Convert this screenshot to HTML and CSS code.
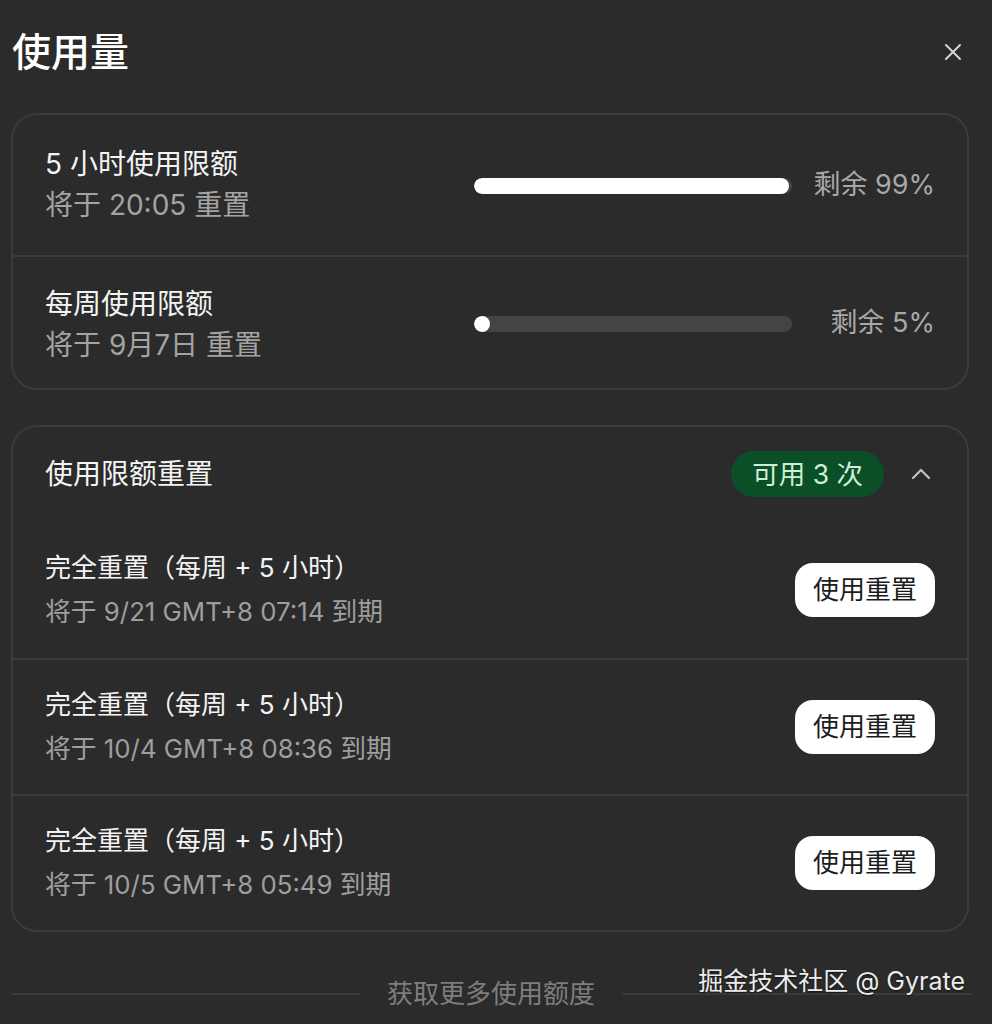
FILE: index.html
```html
<!DOCTYPE html>
<html lang="zh-CN">
<head>
<meta charset="utf-8">
<title>使用量</title>
<link rel="stylesheet" href="styles.css">
</head>
<body>
<div class="page">
  <header class="top">
    <h1 class="title">使用量</h1>
    <button class="close" aria-label="关闭">
      <svg width="18" height="18" viewBox="0 0 18 18"><path d="M2 2 L16 16 M16 2 L2 16" stroke="#d4d4d4" stroke-width="2" stroke-linecap="round" fill="none"/></svg>
    </button>
  </header>

  <section class="card">
    <div class="limit-row first">
      <div class="texts">
        <div class="t1">5 小时使用限额</div>
        <div class="t2">将于 20:05 重置</div>
      </div>
      <div class="bar"><div class="fill" style="width: 99%"></div></div>
      <div class="pct">剩余 99%</div>
    </div>
    <div class="limit-row second">
      <div class="texts">
        <div class="t1">每周使用限额</div>
        <div class="t2">将于 9月7日 重置</div>
      </div>
      <div class="bar"><div class="fill" style="width: 5%"></div></div>
      <div class="pct">剩余 5%</div>
    </div>
  </section>

  <section class="card resets">
    <div class="reset-head">
      <div class="rh-title">使用限额重置</div>
      <div class="pill">可用 3 次</div>
      <svg class="chev" width="20" height="14" viewBox="0 0 20 14"><path d="M2 11 L10 3 L18 11" stroke="#c4c4c4" stroke-width="2.2" fill="none" stroke-linecap="round" stroke-linejoin="round"/></svg>
    </div>
    <div class="item">
      <div class="texts">
        <div class="i1">完全重置（每周 + 5 小时）</div>
        <div class="i2">将于 9/21 GMT+8 07:14 到期</div>
      </div>
      <button class="btn">使用重置</button>
    </div>
    <div class="item">
      <div class="texts">
        <div class="i1">完全重置（每周 + 5 小时）</div>
        <div class="i2">将于 10/4 GMT+8 08:36 到期</div>
      </div>
      <button class="btn">使用重置</button>
    </div>
    <div class="item">
      <div class="texts">
        <div class="i1">完全重置（每周 + 5 小时）</div>
        <div class="i2">将于 10/5 GMT+8 05:49 到期</div>
      </div>
      <button class="btn">使用重置</button>
    </div>
  </section>

  <footer class="more">
    <span class="line"></span>
    <span class="more-text">获取更多使用额度</span>
    <span class="line"></span>
  </footer>

  <div class="watermark">掘金技术社区 @ Gyrate</div>
</div>
</body>
</html>
```

FILE: styles.css
```css
html, body {
  margin: 0;
  padding: 0;
  background: #2b2b2b;
}
body {
  font-family: "Inter", "Noto Sans CJK SC", sans-serif;
  color: #f2f2f2;
}
.page {
  position: relative;
  width: 992px;
  height: 1024px;
  box-sizing: border-box;
  padding: 0 23px 0 11px;
  overflow: hidden;
}
.top {
  display: flex;
  align-items: center;
  justify-content: space-between;
  padding-top: 28px;
  height: 48px;
}
.title {
  margin: 0 0 0 1px;
  font-size: 39px;
  line-height: 48px;
  font-weight: 500;
  color: #ffffff;
}
.close {
  background: none;
  border: 0;
  padding: 0;
  margin-right: 7px;
  width: 18px;
  height: 18px;
  display: flex;
}
.card {
  margin-top: 37px;
  border: 2px solid #3b3b3b;
  border-radius: 26px;
}
.limit-row {
  display: grid;
  grid-template-columns: 1fr 318px 143px;
  align-items: center;
  padding: 0 32px;
}
.limit-row.first {
  height: 140px;
  border-bottom: 2px solid #3b3b3b;
}
.limit-row.second {
  height: 131px;
}
.limit-row.second .texts {
  margin-top: 5px;
}
.t1 {
  font-size: 28px;
  line-height: 41px;
  color: #f4f4f4;
}
.t2 {
  font-size: 28px;
  line-height: 41px;
  color: #a3a3a3;
}
.bar {
  height: 16px;
  border-radius: 8px;
  background: #444444;
  overflow: hidden;
  margin-top: 2px;
}
.fill {
  height: 100%;
  min-width: 16px;
  border-radius: 8px;
  background: #ffffff;
}
.pct {
  text-align: right;
  font-size: 27px;
  line-height: 36px;
  color: #a8a8a8;
}
.resets {
  margin-top: 35px;
}
.reset-head {
  display: flex;
  align-items: center;
  padding: 24px 36px 25px 32px;
}
.rh-title {
  flex: 1;
  font-size: 28px;
  line-height: 40px;
  color: #f4f4f4;
}
.pill {
  height: 46px;
  line-height: 46px;
  padding: 0 21px;
  border-radius: 23px;
  background: #0b4f26;
  color: #cfeed7;
  font-size: 26.5px;
}
.chev {
  margin-left: 27px;
}
.item {
  display: flex;
  align-items: center;
  justify-content: space-between;
  height: 134px;
  padding: 0 32px;
  border-top: 2px solid #3b3b3b;
}
.item:nth-child(2) {
  border-top: 0;
  height: 136px;
}
.i1 {
  font-size: 26px;
  line-height: 44px;
  color: #f4f4f4;
}
.i2 {
  font-size: 25.8px;
  line-height: 44px;
  color: #9e9e9e;
}
.btn {
  font-family: inherit;
  font-size: 26px;
  line-height: 54px;
  height: 54px;
  padding: 0 18px;
  border: 0;
  border-radius: 18px;
  background: #ffffff;
  color: #1c1c1c;
}
.more {
  display: flex;
  align-items: center;
  gap: 27px;
  margin-top: 44px;
  margin-right: -2px;
}
.line {
  flex: 1;
  height: 2px;
  background: #3a3a3a;
}
.more-text {
  font-size: 26px;
  line-height: 36px;
  color: #7e7e7e;
}
.watermark {
  position: absolute;
  right: 27px;
  top: 963px;
  font-size: 25px;
  line-height: 36px;
  color: #ececec;
  text-shadow: 0 1px 2px rgba(0,0,0,0.6);
}
```
